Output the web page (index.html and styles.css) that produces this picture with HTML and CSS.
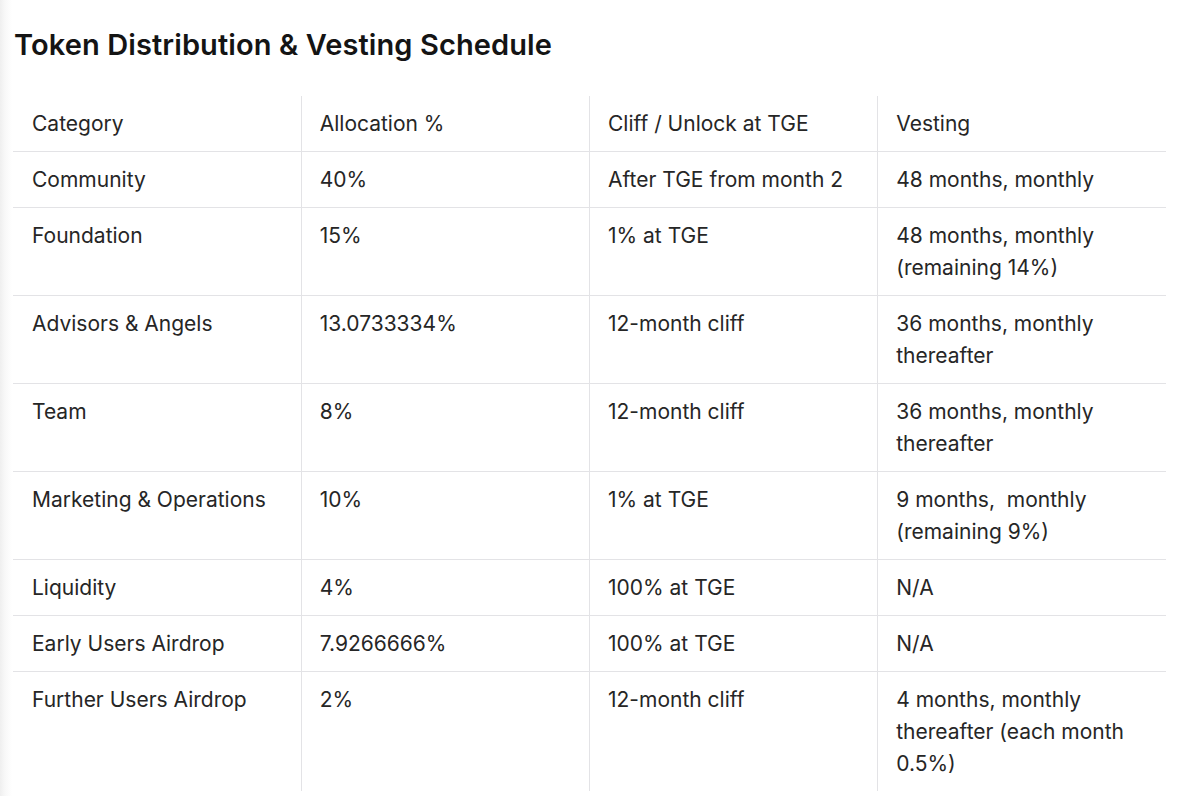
FILE: index.html
```html
<!DOCTYPE html>
<html lang="en">
<head>
<meta charset="utf-8">
<title>Token Distribution &amp; Vesting Schedule</title>
<link rel="stylesheet" href="styles.css">
</head>
<body>
<main class="page">
  <h1 class="title">Token Distribution &amp; Vesting Schedule</h1>
  <table class="schedule">
    <thead>
      <tr><th>Category</th><th>Allocation %</th><th>Cliff / Unlock at TGE</th><th>Vesting</th></tr>
    </thead>
    <tbody>
      <tr><td>Community</td><td>40%</td><td>After TGE from month 2</td><td>48 months, monthly</td></tr>
      <tr><td>Foundation</td><td>15%</td><td>1% at TGE</td><td>48 months, monthly<br>(remaining 14%)</td></tr>
      <tr><td>Advisors &amp; Angels</td><td>13.0733334%</td><td>12-month cliff</td><td>36 months, monthly<br>thereafter</td></tr>
      <tr><td>Team</td><td>8%</td><td>12-month cliff</td><td>36 months, monthly<br>thereafter</td></tr>
      <tr><td>Marketing &amp; Operations</td><td>10%</td><td>1% at TGE</td><td>9 months,&nbsp; monthly<br>(remaining 9%)</td></tr>
      <tr><td>Liquidity</td><td>4%</td><td>100% at TGE</td><td>N/A</td></tr>
      <tr><td>Early Users Airdrop</td><td>7.9266666%</td><td>100% at TGE</td><td>N/A</td></tr>
      <tr class="last"><td>Further Users Airdrop</td><td>2%</td><td>12-month cliff</td><td>4 months, monthly<br>thereafter (each month<br>0.5%)</td></tr>
    </tbody>
  </table>
</main>
</body>
</html>
```

FILE: styles.css
```css
html, body {
  margin: 0;
  padding: 0;
}
body {
  background: linear-gradient(to right, #efefef 0, #f8f8f8 5px, #ffffff 12px);
  font-family: Inter, "Noto Sans", sans-serif;
  color: #262626;
  width: 1192px;
  height: 796px;
  overflow: hidden;
}
.page {
  padding: 27px 0 0 13px;
}
.title {
  margin: 0 0 33px 1px;
  font-size: 29px;
  line-height: 36px;
  font-weight: 600;
  color: #141414;
  letter-spacing: 0.1px;
}
.schedule {
  border-collapse: collapse;
  table-layout: fixed;
  width: 1153px;
}
.schedule th,
.schedule td {
  text-align: left;
  vertical-align: top;
  font-weight: 400;
  font-size: 21px;
  line-height: 32px;
  padding: 12px 18px 11px 18px;
  border-bottom: 1px solid #e3e3e6;
  border-left: 1px solid #e3e3e6;
}
.schedule th:first-child,
.schedule td:first-child {
  border-left: none;
  padding-left: 19px;
}
.schedule tr.last td {
  border-bottom: none;
}
```
